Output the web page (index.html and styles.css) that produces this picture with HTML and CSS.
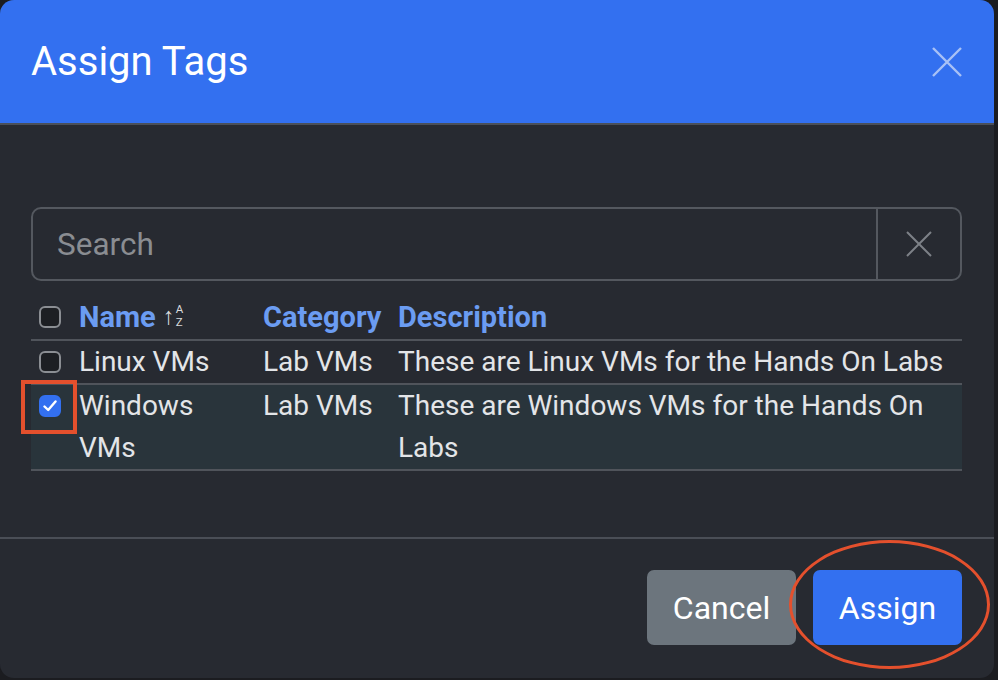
FILE: index.html
```html
<!DOCTYPE html>
<html>
<head>
<meta charset="utf-8">
<link rel="stylesheet" href="styles.css">
</head>
<body>
<div class="backdrop">
  <div class="modal">
    <div class="modal-header">
      <h1 class="title">Assign Tags</h1>
      <button class="close" aria-label="Close">
        <svg width="30" height="30" viewBox="0 0 30 30"><path d="M1 1L29 29M29 1L1 29" stroke="#a8c1f6" stroke-width="2.4" fill="none"/></svg>
      </button>
    </div>
    <div class="modal-body">
      <div class="search">
        <div class="search-input">Search</div>
        <div class="search-clear">
          <svg width="26" height="26" viewBox="0 0 26 26"><path d="M1 1L25 25M25 1L1 25" stroke="#7d8187" stroke-width="2" fill="none"/></svg>
        </div>
      </div>
      <table class="tags">
        <thead>
          <tr>
            <th class="c-check"><span class="cb"></span></th>
            <th class="c-name"><span class="name-label">Name</span><span class="sort"><span class="arrow">↑</span><span class="az"><span>A</span><span>Z</span></span></span></th>
            <th class="c-cat">Category</th>
            <th class="c-desc">Description</th>
          </tr>
        </thead>
        <tbody>
          <tr>
            <td class="c-check"><span class="cb"></span></td>
            <td>Linux VMs</td>
            <td>Lab VMs</td>
            <td>These are Linux VMs for the Hands On Labs</td>
          </tr>
          <tr class="selected">
            <td class="c-check"><span class="cb checked"><svg width="14" height="12" viewBox="0 0 14 12"><path d="M1.5 6.5L5.2 10L12.5 1.5" stroke="#fff" stroke-width="2.4" fill="none" stroke-linecap="round" stroke-linejoin="round"/></svg></span></td>
            <td>Windows<br>VMs</td>
            <td>Lab VMs</td>
            <td>These are Windows VMs for the Hands On<br>Labs</td>
          </tr>
        </tbody>
      </table>
    </div>
    <div class="modal-footer">
      <button class="btn btn-cancel">Cancel</button>
      <button class="btn btn-assign">Assign</button>
    </div>
    <div class="mark-rect"></div>
    <div class="mark-ellipse"></div>
  </div>
</div>
</body>
</html>
```

FILE: styles.css
```css
html, body {
  margin: 0;
  padding: 0;
}
body {
  background: #1b1c20;
  font-family: Roboto, "Liberation Sans", Arial, sans-serif;
  width: 998px;
  height: 680px;
  overflow: hidden;
}
.backdrop {
  width: 998px;
  height: 680px;
}
.modal {
  position: relative;
  width: 994px;
  height: 678px;
  background: #272a31;
  border-radius: 14px;
  overflow: hidden;
  display: flex;
  flex-direction: column;
}
.modal-header {
  height: 123px;
  background: #3370f0;
  border-bottom: 2px solid #4a4f59;
  display: flex;
  align-items: center;
  justify-content: space-between;
  padding: 0 32px 0 31px;
  flex-shrink: 0;
}
.title {
  margin: 0;
  color: #ffffff;
  font-weight: 400;
  font-size: 40px;
}
.close {
  background: none;
  border: 0;
  padding: 0;
  width: 30px;
  height: 30px;
  display: flex;
}
.modal-body {
  padding: 82px 32px 0 31px;
  flex: 1;
}
.search {
  display: flex;
  height: 74px;
  border: 2px solid #54585f;
  border-radius: 10px;
  box-sizing: border-box;
}
.search-input {
  flex: 1;
  display: flex;
  align-items: center;
  padding-left: 24px;
  color: #8a8d92;
  font-size: 31.5px;
}
.search-clear {
  width: 82px;
  border-left: 2px solid #54585f;
  display: flex;
  align-items: center;
  justify-content: center;
}
.tags {
  width: 931px;
  margin-top: 14px;
  border-collapse: collapse;
  font-size: 28px;
  color: #e3e5e8;
}
.tags th, .tags td {
  text-align: left;
  vertical-align: top;
  padding: 0;
  white-space: nowrap;
}
.tags th {
  color: #6b9cf2;
  font-weight: 700;
  font-size: 29px;
  height: 44px;
  line-height: 44px;
  border-bottom: 2px solid #50545b;
}
.tags td {
  line-height: 42px;
  border-bottom: 2px solid #50545b;
}
.tags .c-check {
  width: 48px;
  padding-left: 8px;
  box-sizing: border-box;
}
.tags .c-name { width: 184px; }
.tags .c-cat { width: 135px; }
.tags tr.selected td {
  background: #29343b;
}
.cb {
  display: inline-flex;
  align-items: center;
  justify-content: center;
  width: 22px;
  height: 22px;
  border: 2px solid #8b8e93;
  border-radius: 6px;
  background: #1d1f23;
  box-sizing: border-box;
  vertical-align: middle;
  position: relative;
  top: -2px;
}
.cb.checked {
  background: #3370f0;
  border-color: #3370f0;
}
.sort {
  display: inline-flex;
  align-items: center;
  vertical-align: middle;
  color: #d9dbde;
  font-weight: 400;
  position: relative;
  top: -3px;
  margin-left: 7px;
}
.arrow {
  font-size: 24px;
  line-height: 26px;
}
.az {
  display: inline-flex;
  flex-direction: column;
  font-size: 11.5px;
  line-height: 13px;
  margin-left: 1px;
}
.modal-footer {
  border-top: 2px solid #4a4e56;
  height: 141px;
  box-sizing: border-box;
  display: flex;
  justify-content: flex-end;
  align-items: flex-start;
  padding: 31px 32px 0 0;
  gap: 17px;
  flex-shrink: 0;
}
.btn {
  height: 75px;
  border: 0;
  border-radius: 7px;
  color: #ffffff;
  font-family: Roboto, "Liberation Sans", Arial, sans-serif;
  font-size: 32px;
  padding: 0;
}
.btn-cancel {
  width: 149px;
  background: #6c757d;
}
.btn-assign {
  width: 149px;
  background: #3370f0;
}
.mark-rect {
  position: absolute;
  left: 21px;
  top: 380px;
  width: 56px;
  height: 54px;
  border: 4px solid #e4502d;
  box-sizing: border-box;
}
.mark-ellipse {
  position: absolute;
  left: 789px;
  top: 540px;
  width: 201px;
  height: 129px;
  border: 3px solid #e4502d;
  border-radius: 50%;
  box-sizing: border-box;
}
```
